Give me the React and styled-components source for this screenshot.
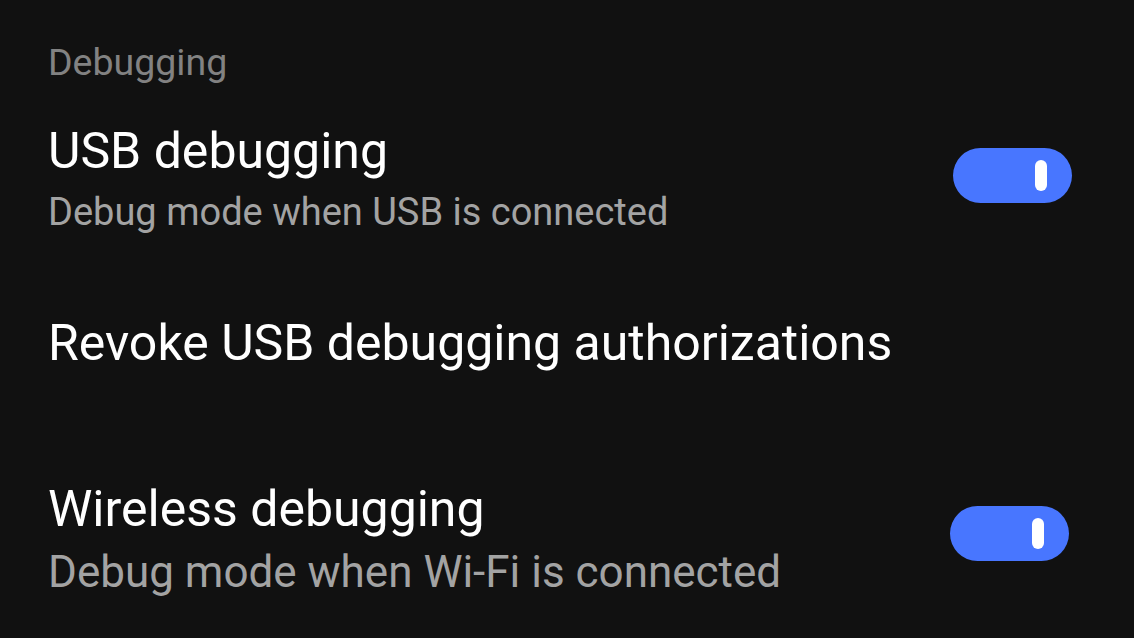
import React from "react";
import styled, { createGlobalStyle } from "styled-components";

const Global = createGlobalStyle`
  html, body { margin: 0; padding: 0; background: #111111; }
  body { font-family: Roboto, "Noto Sans", sans-serif; -webkit-font-smoothing: antialiased; }
`;

const Page = styled.div`
  width: 1134px;
  height: 638px;
  overflow: hidden;
  background: #111111;
  box-sizing: border-box;
  padding: 40px 62px 0 48px;
  display: flex;
  flex-direction: column;
`;

const Header = styled.div`
  font-size: 37.5px;
  line-height: 44px;
  color: #828282;
  height: 44px;
`;

const Row = styled.div`
  display: flex;
  align-items: center;
  justify-content: space-between;
  margin-top: ${(p) => p.$gap}px;
`;

const TextCol = styled.div`
  display: flex;
  flex-direction: column;
`;

const Title = styled.div`
  font-size: 50px;
  line-height: 60px;
  color: #ffffff;
  white-space: nowrap;
`;

const Subtitle = styled.div`
  font-size: ${(p) => p.$size}px;
  line-height: ${(p) => p.$lh}px;
  margin-top: ${(p) => p.$gap}px;
  color: #a3a3a3;
  white-space: nowrap;
`;

const Track = styled.div`
  width: 119px;
  height: 55px;
  border-radius: 28px;
  background: #4876ff;
  display: flex;
  align-items: center;
  justify-content: flex-end;
  padding-right: 25px;
  box-sizing: border-box;
  margin-right: ${(p) => p.$shift || 0}px;
  margin-top: ${(p) => p.$dy || 0}px;
`;

const Knob = styled.div`
  width: 12px;
  height: 31px;
  border-radius: 6px;
  background: #ffffff;
`;

function Toggle({ shift, dy }) {
  return (
    <Track $shift={shift} $dy={dy}>
      <Knob />
    </Track>
  );
}

export default function App() {
  return (
    <>
      <Global />
      <Page>
        <Header>Debugging</Header>
        <Row $gap={37}>
          <TextCol>
            <Title>USB debugging</Title>
            <Subtitle $size={38} $lh={48} $gap={7}>
              Debug mode when USB is connected
            </Subtitle>
          </TextCol>
          <Toggle dy={-7} />
        </Row>
        <Row $gap={77}>
          <TextCol>
            <Title>Revoke USB debugging authorizations</Title>
          </TextCol>
        </Row>
        <Row $gap={106}>
          <TextCol>
            <Title>Wireless debugging</Title>
            <Subtitle $size={44} $lh={52} $gap={7}>
              Debug mode when Wi-Fi is connected
            </Subtitle>
          </TextCol>
          <Toggle shift={3} dy={-10} />
        </Row>
      </Page>
    </>
  );
}
